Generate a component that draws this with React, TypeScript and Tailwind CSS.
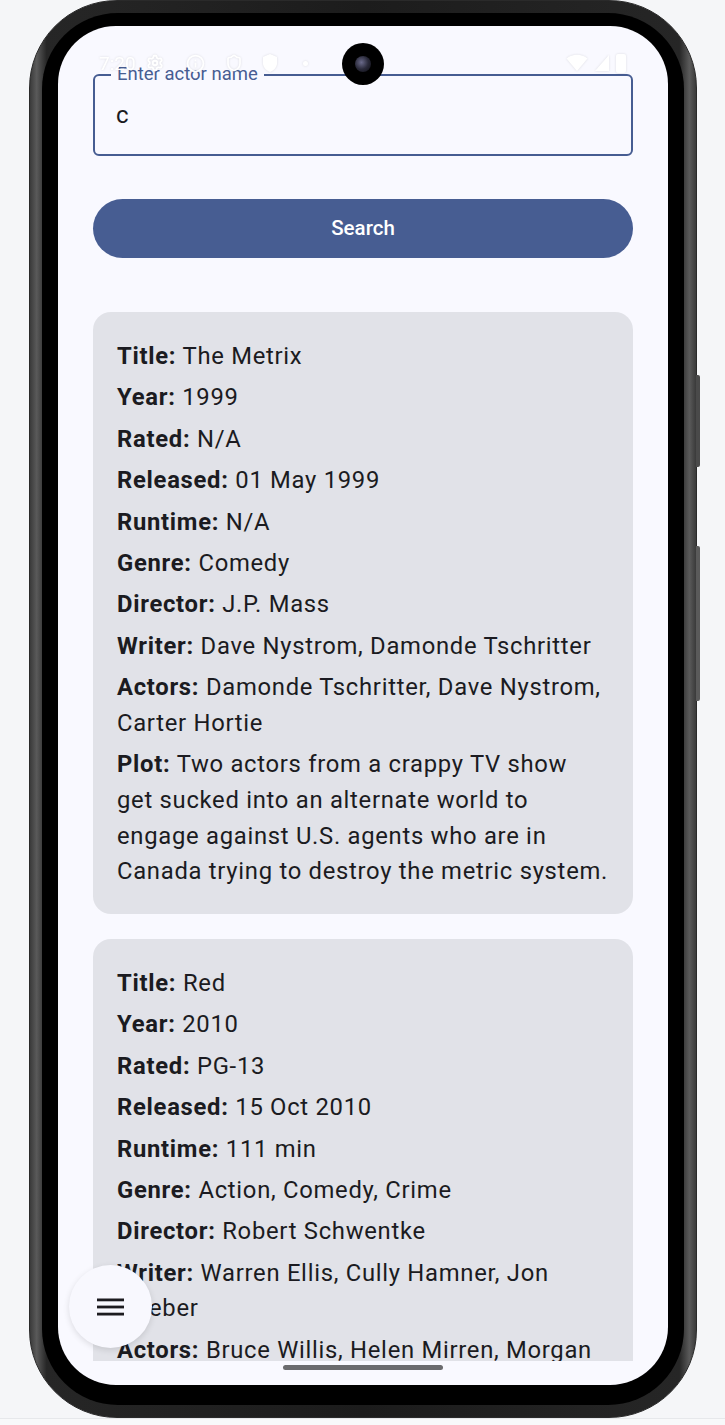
import React from "react";
import { Settings, Info, Shield } from "lucide-react";

type Movie = { label: string; value: string }[];

const MOVIES: Movie[] = [
  [
    { label: "Title", value: "The Metrix" },
    { label: "Year", value: "1999" },
    { label: "Rated", value: "N/A" },
    { label: "Released", value: "01 May 1999" },
    { label: "Runtime", value: "N/A" },
    { label: "Genre", value: "Comedy" },
    { label: "Director", value: "J.P. Mass" },
    { label: "Writer", value: "Dave Nystrom, Damonde Tschritter" },
    { label: "Actors", value: "Damonde Tschritter, Dave Nystrom, Carter Hortie" },
    {
      label: "Plot",
      value:
        "Two actors from a crappy TV show get sucked into an alternate world to engage against U.S. agents who are in Canada trying to destroy the metric system.",
    },
  ],
  [
    { label: "Title", value: "Red" },
    { label: "Year", value: "2010" },
    { label: "Rated", value: "PG-13" },
    { label: "Released", value: "15 Oct 2010" },
    { label: "Runtime", value: "111 min" },
    { label: "Genre", value: "Action, Comedy, Crime" },
    { label: "Director", value: "Robert Schwentke" },
    { label: "Writer", value: "Warren Ellis, Cully Hamner, Jon Hoeber" },
    { label: "Actors", value: "Bruce Willis, Helen Mirren, Morgan Freeman" },
    {
      label: "Plot",
      value:
        "When his peaceful life is threatened by a high-tech assassin, former black-ops agent Frank Moses reassembles his old team in a last ditch effort to survive and uncover his assailants.",
    },
  ],
];

function StatusBar() {
  return (
    <div className="absolute left-0 right-0 top-[24px] h-[26px] flex items-center justify-between pl-[41px] pr-[42px] text-white pointer-events-none [filter:drop-shadow(0_0_1px_rgba(0,0,0,0.12))]">
      <div className="flex items-center gap-[10px]">
        <span className="font-['Roboto'] text-[19px] leading-none">7:20</span>
        <Settings size={18} strokeWidth={2.4} />
        <Info size={19} strokeWidth={2.2} className="ml-[12px]" />
        <Shield size={18} strokeWidth={2.2} className="ml-[10px]" />
        <svg width="18" height="20" viewBox="0 0 18 20" className="ml-[8px]">
          <path d="M9 1 L16 4 V10 C16 14 13 17.5 9 19 C5 17.5 2 14 2 10 V4 Z" fill="white" />
        </svg>
        <span className="ml-[14px] w-[5px] h-[5px] rounded-full bg-white" />
      </div>
      <div className="flex items-center gap-[6px]">
        <svg width="22" height="18" viewBox="0 0 22 18">
          <path d="M11 17 L0.5 4.5 C6.5 -0.5 15.5 -0.5 21.5 4.5 Z" fill="white" />
        </svg>
        <svg width="16" height="18" viewBox="0 0 16 18">
          <path d="M15 1 V17 H1 Z" fill="white" />
        </svg>
        <div className="w-[10px] h-[19px] rounded-[2px] bg-white" />
      </div>
    </div>
  );
}

function MovieCard({ rows }: { rows: Movie }) {
  return (
    <div className="rounded-[18px] bg-[#E1E2E8] px-[24px] pt-[27px] pb-[24px] flex flex-col gap-[5.7px]">
      {rows.map((r) => (
        <p
          key={r.label}
          className="font-['Roboto'] text-[23.8px] leading-[35.7px] tracking-[0.72px] text-[#1B1B21]"
        >
          <span className="font-bold">{r.label}:</span> {r.value}
        </p>
      ))}
    </div>
  );
}

export default function App() {
  return (
    <div className="min-h-screen bg-[#F5F6F8] flex flex-col">
      <div className="pl-[29px] h-[1418px]">
        <div className="relative w-[668px] h-[1418px] rounded-[88px] bg-[linear-gradient(90deg,#3a3a3a_0%,#5a5a5a_1%,#262626_2.5%,#1c1c1c_50%,#262626_97.5%,#5a5a5a_99%,#3a3a3a_100%)] border border-[#2a2a2a] p-[12px]">
          <div className="absolute right-[-4px] top-[374px] w-[4px] h-[92px] rounded-r-[2px] bg-[#4a4a4a]" />
          <div className="absolute right-[-4px] top-[545px] w-[4px] h-[155px] rounded-r-[2px] bg-[#5a5a5a]" />
          <div className="w-full h-full rounded-[76px] bg-black pt-[13px] pb-[20px] px-[16px]">
            <div className="relative w-full h-full rounded-[58px] bg-[#F9F9FF] overflow-hidden flex flex-col">
              {/* scrollable content */}
              <div className="h-[1335px] overflow-hidden px-[35px] pt-[48px]">
                <div className="relative h-[82px] rounded-[6px] border-2 border-[#475D92] flex items-center px-[21px]">
                  <span className="absolute left-[16px] top-[-12px] px-[6px] bg-[#F9F9FF] font-['Roboto'] text-[18.5px] leading-[20px] text-[#475D92]">
                    Enter actor name
                  </span>
                  <span className="font-['Roboto'] text-[24px] text-[#1B1B21]">c</span>
                </div>
                <button className="mt-[43px] w-full h-[59px] rounded-full bg-[#475D92] text-white font-['Roboto'] font-medium text-[20.5px] flex items-center justify-center">
                  Search
                </button>
                <div className="mt-[54px] flex flex-col gap-[25px]">
                  {MOVIES.map((m, i) => (
                    <MovieCard key={i} rows={m} />
                  ))}
                </div>
              </div>
              {/* gesture bar */}
              <div className="h-[24px] pt-[4px] flex justify-center">
                <div className="w-[160px] h-[5px] rounded-full bg-[#6B6B6E]" />
              </div>

              <StatusBar />

              {/* menu button */}
              <button className="absolute left-[11px] top-[1239px] w-[83px] h-[83px] rounded-full bg-[#F8F8FE] shadow-[0_2px_6px_rgba(0,0,0,0.12)] flex items-center justify-center">
                <svg width="27" height="18" viewBox="0 0 27 18">
                  <rect x="0" y="0.5" width="27" height="2.8" fill="#1C1B1F" />
                  <rect x="0" y="7.6" width="27" height="2.8" fill="#1C1B1F" />
                  <rect x="0" y="14.7" width="27" height="2.8" fill="#1C1B1F" />
                </svg>
              </button>
            </div>
          </div>
          {/* camera */}
          <div className="absolute left-[312px] top-[42px] w-[42px] h-[42px] rounded-full bg-black flex items-center justify-center">
            <div className="w-[16px] h-[16px] rounded-full bg-[radial-gradient(circle_at_40%_40%,#6a6a8a_0%,#2a2a3a_50%,#0a0a10_100%)]" />
          </div>
        </div>
      </div>
      <div className="border-t border-[#E6E8EB] bg-[#F8F9FA] flex-1" />
    </div>
  );
}
